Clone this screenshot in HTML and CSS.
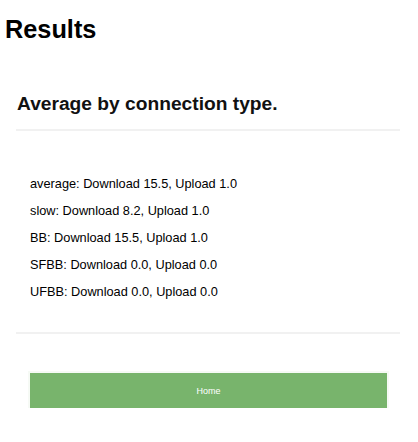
FILE: index.html
```html
<!DOCTYPE html>
<html>
<head>
<meta charset="utf-8">
<title>Results</title>
<link rel="stylesheet" href="styles.css">
</head>
<body>
<h1 class="title">Results</h1>
<section class="card">
  <h2 class="card-title">Average by connection type.</h2>
  <hr class="rule">
  <ul class="results">
    <li>average: Download 15.5, Upload 1.0</li>
    <li>slow: Download 8.2, Upload 1.0</li>
    <li>BB: Download 15.5, Upload 1.0</li>
    <li>SFBB: Download 0.0, Upload 0.0</li>
    <li>UFBB: Download 0.0, Upload 0.0</li>
  </ul>
  <hr class="rule rule-bottom">
  <div class="actions">
    <a class="button" href="#">Home</a>
  </div>
</section>
</body>
</html>
```
FILE: styles.css
```css
html, body {
  margin: 0;
  padding: 0;
  background: #ffffff;
  font-family: "Liberation Sans", Arial, sans-serif;
  color: #000;
}
.title {
  margin: 15px 5px 0;
  font-size: 25.3px;
  line-height: 29px;
  font-weight: bold;
}
.card {
  margin: 49px 18px 0 16px;
}
.card-title {
  margin: 0;
  padding-left: 1px;
  font-size: 19.2px;
  line-height: 22px;
  font-weight: bold;
  color: #111;
}
.rule {
  border: 0;
  height: 2px;
  background: #f1f1f1;
  margin: 14px 0 0;
}
.results {
  list-style: none;
  margin: 0;
  padding: 44px 0 0 14px;
  display: flex;
  flex-direction: column;
  gap: 10px;
  font-size: 12.75px;
  line-height: 17px;
}
.rule-bottom {
  margin-top: 32px;
}
.actions {
  padding: 39px 13px 0 14px;
}
.button {
  display: block;
  height: 35px;
  line-height: 37px;
  background: #78b46c;
  color: #fff;
  text-align: center;
  font-size: 9px;
  text-decoration: none;
  box-shadow: 0 0 0 2px #f6faf5;
}
```
